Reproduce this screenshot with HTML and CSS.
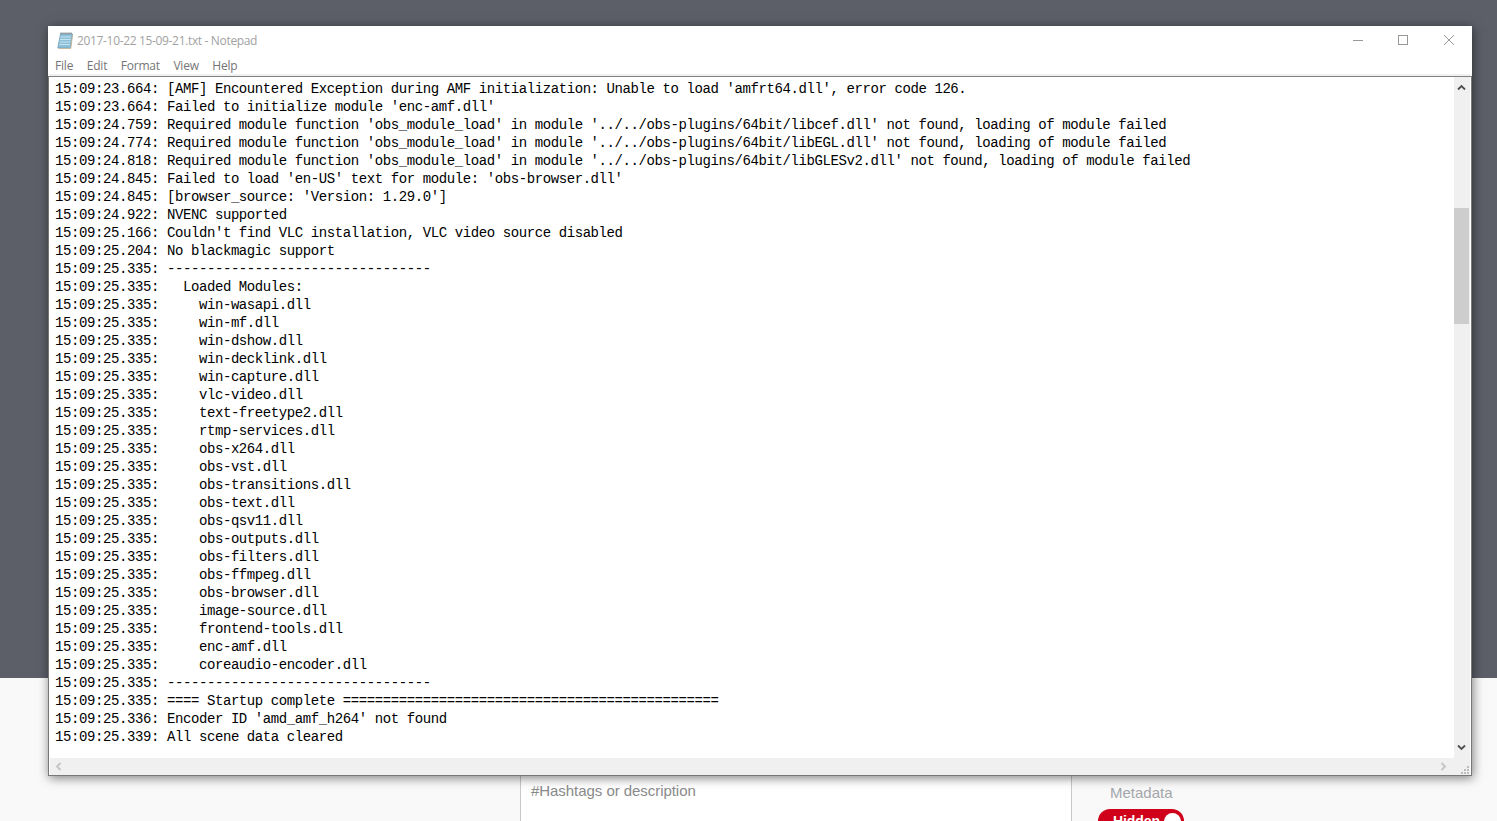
FILE: index.html
```html
<!DOCTYPE html>
<html lang="en">
<head>
<meta charset="utf-8">
<title>Notepad</title>
<link rel="stylesheet" href="styles.css">
</head>
<body>
<div class="page">
  <div class="hero"></div>
  <div class="lower">
    <div class="side-left"></div>
    <div class="main-col"><div class="hashtags">#Hashtags or description</div></div>
    <div class="side-right">
      <div class="meta-label">Metadata</div>
      <div class="toggle"><span class="toggle-text">Hidden</span><span class="knob"></span></div>
    </div>
  </div>
</div>
<div class="window">
  <div class="titlebar">
    <svg class="app-icon" width="16" height="17" viewBox="0 0 16 17">
      <path d="M3.5 2h12l-2 14H.8z" fill="#8cc0d8" stroke="#6f9db5" stroke-width=".8"/>
      <path d="M3.3 5h10.6M3 7.5h10.6M2.7 10h10.6M2.3 12.5h10.6" stroke="#cde8f3" stroke-width=".9"/>
      <path d="M4 2V.5M6 2V.5M8 2V.5M10 2V.5M12 2V.5M14 2V.5" stroke="#555" stroke-width=".9"/>
      <path d="M15.5 3l-1.8 13.5H2" fill="none" stroke="#c9b48c" stroke-width=".8"/>
    </svg>
    <span class="title">2017-10-22 15-09-21.txt - Notepad</span>
    <div class="controls">
      <svg width="12" height="12" viewBox="0 0 12 12"><path d="M1 6.5h10" stroke="#999"/></svg>
      <svg width="12" height="12" viewBox="0 0 12 12"><rect x="1.5" y="1.5" width="9" height="9" fill="none" stroke="#999"/></svg>
      <svg width="13" height="12" viewBox="0 0 13 12"><path d="M2 1l10 10M12 1L2 11" stroke="#999"/></svg>
    </div>
  </div>
  <div class="menubar">
    <span class="menu-item">File</span>
    <span class="menu-item">Edit</span>
    <span class="menu-item">Format</span>
    <span class="menu-item">View</span>
    <span class="menu-item">Help</span>
  </div>
  <div class="editor">
<pre class="log">15:09:23.664: [AMF] Encountered Exception during AMF initialization: Unable to load 'amfrt64.dll', error code 126.
15:09:23.664: Failed to initialize module 'enc-amf.dll'
15:09:24.759: Required module function 'obs_module_load' in module '../../obs-plugins/64bit/libcef.dll' not found, loading of module failed
15:09:24.774: Required module function 'obs_module_load' in module '../../obs-plugins/64bit/libEGL.dll' not found, loading of module failed
15:09:24.818: Required module function 'obs_module_load' in module '../../obs-plugins/64bit/libGLESv2.dll' not found, loading of module failed
15:09:24.845: Failed to load 'en-US' text for module: 'obs-browser.dll'
15:09:24.845: [browser_source: 'Version: 1.29.0']
15:09:24.922: NVENC supported
15:09:25.166: Couldn't find VLC installation, VLC video source disabled
15:09:25.204: No blackmagic support
15:09:25.335: ---------------------------------
15:09:25.335:   Loaded Modules:
15:09:25.335:     win-wasapi.dll
15:09:25.335:     win-mf.dll
15:09:25.335:     win-dshow.dll
15:09:25.335:     win-decklink.dll
15:09:25.335:     win-capture.dll
15:09:25.335:     vlc-video.dll
15:09:25.335:     text-freetype2.dll
15:09:25.335:     rtmp-services.dll
15:09:25.335:     obs-x264.dll
15:09:25.335:     obs-vst.dll
15:09:25.335:     obs-transitions.dll
15:09:25.335:     obs-text.dll
15:09:25.335:     obs-qsv11.dll
15:09:25.335:     obs-outputs.dll
15:09:25.335:     obs-filters.dll
15:09:25.335:     obs-ffmpeg.dll
15:09:25.335:     obs-browser.dll
15:09:25.335:     image-source.dll
15:09:25.335:     frontend-tools.dll
15:09:25.335:     enc-amf.dll
15:09:25.335:     coreaudio-encoder.dll
15:09:25.335: ---------------------------------
15:09:25.335: ==== Startup complete ===============================================
15:09:25.336: Encoder ID 'amd_amf_h264' not found
15:09:25.339: All scene data cleared</pre>
    <div class="vscroll">
      <svg class="arrow-up" width="9" height="7" viewBox="0 0 9 7"><path d="M1 5.5l3.5-3.5 3.5 3.5" fill="none" stroke="#505050" stroke-width="1.8"/></svg>
      <div class="vthumb"></div>
      <svg class="arrow-down" width="9" height="7" viewBox="0 0 9 7"><path d="M1 1.5l3.5 3.5 3.5-3.5" fill="none" stroke="#505050" stroke-width="1.8"/></svg>
    </div>
  </div>
  <div class="hscroll-frame">
    <div class="hscroll">
      <svg class="arrow-h" width="7" height="9" viewBox="0 0 7 9"><path d="M5.5 1L2 4.5 5.5 8" fill="none" stroke="#c4c4c4" stroke-width="1.8"/></svg>
      <svg class="arrow-h arrow-right" width="7" height="9" viewBox="0 0 7 9"><path d="M1.5 1L5 4.5 1.5 8" fill="none" stroke="#c4c4c4" stroke-width="1.8"/></svg>
      <svg class="grip" width="9" height="9" viewBox="0 0 9 9"><path d="M7 1h2v2H7zM4 4h2v2H4zM7 4h2v2H7zM1 7h2v2H1zM4 7h2v2H4zM7 7h2v2H7z" fill="#bdbdbd"/></svg>
    </div>
  </div>
</div>
</body>
</html>
```
FILE: styles.css
```css
html, body {
  margin: 0;
  padding: 0;
  height: 821px;
  overflow: hidden;
  background: #f9f9f9;
}

.page {
  display: flex;
  flex-direction: column;
  height: 821px;
  font-family: "Liberation Sans", Arial, sans-serif;
}

.hero {
  height: 678px;
  flex: none;
  background: #5c5f68;
}

.lower {
  flex: 1;
  display: flex;
  min-height: 0;
  overflow: hidden;
}

.side-left {
  width: 520px;
  flex: none;
  background: #f9f9f9;
  border-right: 1px solid #c9c9c9;
}

.main-col {
  width: 551px;
  flex: none;
  background: #fff;
  border-right: 1px solid #c9c9c9;
  padding: 104px 0 0 10px;
  box-sizing: border-box;
}

.hashtags {
  font-size: 15px;
  letter-spacing: -.05px;
  line-height: 18px;
  color: #8a8a8a;
}

.side-right {
  flex: 1;
  background: #f9f9f9;
  padding: 106px 0 0 26px;
}

.meta-label {
  font-size: 15px;
  line-height: 18px;
  color: #a4a6ab;
  margin-left: 12px;
}

.toggle {
  display: flex;
  align-items: center;
  width: 86px;
  height: 24px;
  margin-top: 7px;
  box-sizing: border-box;
  border-radius: 12px;
  background: #d0021b;
  padding: 0 3px 0 15px;
  justify-content: space-between;
}

.toggle-text {
  font-size: 14px;
  font-weight: 700;
  letter-spacing: -.1px;
  color: #fff;
}

.knob {
  width: 17px;
  height: 17px;
  border-radius: 50%;
  background: #fff;
}

.window {
  position: absolute;
  left: 48px;
  top: 26px;
  width: 1424px;
  height: 750px;
  box-sizing: border-box;
  display: flex;
  flex-direction: column;
  background: #fff;
  border-bottom: 1px solid #777;
  box-shadow: 1px 2px 10px rgba(0, 0, 0, .5);
}

.titlebar {
  height: 28px;
  flex: none;
  display: flex;
  align-items: center;
  font-family: "Open Sans", sans-serif;
  background: #fff;
}

.app-icon {
  margin-left: 9px;
  margin-top: 1px;
}

.title {
  margin-left: 4px;
  font-size: 12px;
  letter-spacing: -.34px;
  color: #a2a2a2;
}

.controls {
  margin-left: auto;
  margin-right: 17px;
  display: flex;
  gap: 33px;
}

.menubar {
  height: 17px;
  padding-top: 3px;
  padding-left: 7px;
  flex: none;
  display: flex;
  align-items: center;
  font-family: "Open Sans", sans-serif;
  font-size: 12px;
  letter-spacing: -.2px;
  color: #757575;
  gap: 13.5px;
  background: #fff;
  border-bottom: 2px solid #f0f0f0;
  box-sizing: content-box;
}

.editor {
  height: 681px;
  flex: none;
  display: flex;
  border-top: 1px solid #808080;
  border-left: 1px solid #777;
  border-right: 1px solid #777;
  padding: 0 1px;
}

.log {
  flex: 1;
  margin: 0;
  padding: 3px 0 0 5px;
  font-family: "Liberation Mono", monospace;
  font-size: 14px;
  letter-spacing: -.407px;
  line-height: 18px;
  color: #000;
  white-space: pre;
  overflow: hidden;
}

.vscroll {
  width: 16px;
  flex: none;
  background: #f0f0f0;
  display: flex;
  flex-direction: column;
}

.arrow-up {
  margin: 7px 0 0 3px;
}

.vthumb {
  width: 15px;
  height: 116px;
  margin-top: 117px;
  background: #cdcdcd;
}

.arrow-down {
  margin: auto 0 7px 3px;
}

.hscroll-frame {
  flex: 1;
  display: flex;
  border-left: 1px solid #777;
  border-right: 1px solid #777;
  padding: 0 1px;
  background: #fff;
}

.hscroll {
  flex: 1;
  display: flex;
  align-items: center;
  background: #f0f0f0;
  position: relative;
  padding: 0 23px 0 5px;
}

.arrow-right {
  margin-left: auto;
}

.grip {
  position: absolute;
  right: 1px;
  bottom: 1px;
}
```
